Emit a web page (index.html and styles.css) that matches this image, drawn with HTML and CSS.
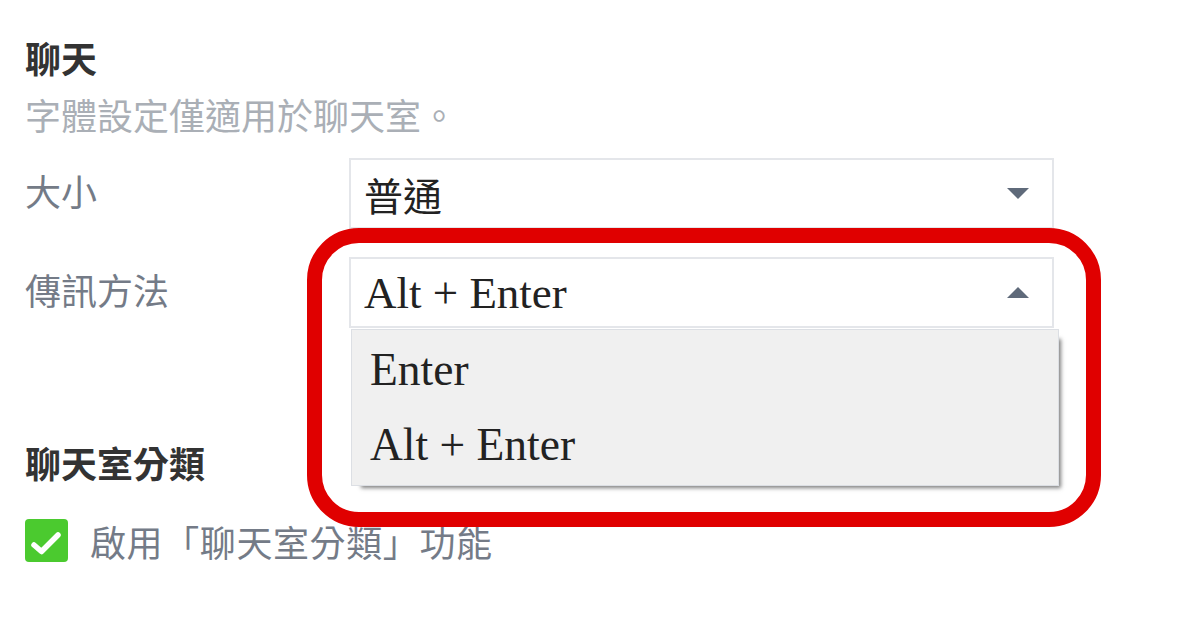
FILE: index.html
```html
<!DOCTYPE html>
<html lang="zh-Hant">
<head>
<meta charset="utf-8">
<title>設定</title>
<link rel="stylesheet" href="styles.css">
</head>
<body>
<div class="page">
  <section class="group">
    <h2 class="title">聊天</h2>
    <p class="desc">字體設定僅適用於聊天室。</p>
    <div class="row row-first">
      <span class="label">大小</span>
      <div class="select">
        <span class="value value-cjk">普通</span>
        <svg class="caret" width="22" height="11" viewBox="0 0 22 11"><polygon points="0,0 22,0 11,11"/></svg>
      </div>
    </div>
    <div class="row row-second">
      <span class="label">傳訊方法</span>
      <div class="select">
        <span class="value">Alt + Enter</span>
        <svg class="caret" width="22" height="11" viewBox="0 0 22 11"><polygon points="0,11 22,11 11,0"/></svg>
        <ul class="menu">
          <li class="option">Enter</li>
          <li class="option">Alt + Enter</li>
        </ul>
      </div>
    </div>
  </section>
  <section class="group group-second">
    <h2 class="title">聊天室分類</h2>
    <div class="check-row">
      <span class="checkbox">
        <svg width="43" height="43" viewBox="0 0 43 43"><path d="M9 26 L16.5 32.5 L33 16" fill="none" stroke="#fff" stroke-width="5.5" stroke-linecap="round" stroke-linejoin="round"/></svg>
      </span>
      <span class="check-label">啟用「聊天室分類」功能</span>
    </div>
  </section>
  <div class="annotation"></div>
</div>
</body>
</html>
```

FILE: styles.css
```css
* { box-sizing: border-box; }
html, body { margin: 0; padding: 0; background: #fff; }
body {
  font-family: "Noto Sans CJK TC", "Noto Sans", sans-serif;
  width: 1200px;
  height: 630px;
  overflow: hidden;
}
.page {
  position: relative;
  padding: 37px 0 0 25px;
  height: 630px;
}
.title {
  margin: 0;
  font-size: 36px;
  line-height: 40px;
  font-weight: 700;
  color: #333;
}
.desc {
  margin: 17px 0 0;
  font-size: 36px;
  line-height: 40px;
  color: #aaafb6;
}
.row {
  display: flex;
  align-items: flex-start;
}
.row-first { margin-top: 24px; }
.row-second { margin-top: 28px; }
.label {
  width: 324px;
  flex: none;
  padding-top: 12px;
  font-size: 36px;
  line-height: 40px;
  color: #747b87;
}
.select {
  position: relative;
  width: 705px;
  height: 71px;
  border: 2px solid #e4e6ea;
  background: #fff;
  display: flex;
  align-items: center;
  justify-content: space-between;
  padding: 0 23px 0 13px;
}
.value {
  font-family: "Liberation Serif", "Noto Sans CJK TC", serif;
  font-size: 45px;
  color: #222;
}
.value-cjk {
  font-family: "Noto Sans CJK TC", sans-serif;
  font-size: 39px;
}
.caret { fill: #5f6a7a; display: block; }
.menu {
  position: absolute;
  top: calc(100% + 3px);
  left: 0;
  width: 708px;
  margin: 0;
  padding: 2px 0 3px;
  list-style: none;
  background: #f0f0f0;
  border: 1px solid #dcdfe4;
  box-shadow: 6px 6px 4px -4px rgba(0, 0, 0, 0.5);
  z-index: 2;
}
.option {
  height: 75px;
  line-height: 75px;
  padding-left: 18px;
  font-family: "Liberation Serif", serif;
  font-size: 45.5px;
  color: #222;
}
.group-second { margin-top: 114px; }
.check-row {
  margin-top: 37px;
  display: flex;
  align-items: center;
  gap: 22px;
}
.checkbox {
  width: 43px;
  height: 43px;
  flex: none;
  border-radius: 4px;
  background: #4bca2f;
  display: block;
}
.checkbox svg { display: block; }
.check-label {
  font-size: 36px;
  line-height: 40px;
  letter-spacing: 0.6px;
  color: #747b87;
}
.annotation {
  position: absolute;
  left: 307px;
  top: 228px;
  width: 794px;
  height: 299px;
  border: 15px solid #e00000;
  border-radius: 52px;
  z-index: 3;
  pointer-events: none;
}
```
